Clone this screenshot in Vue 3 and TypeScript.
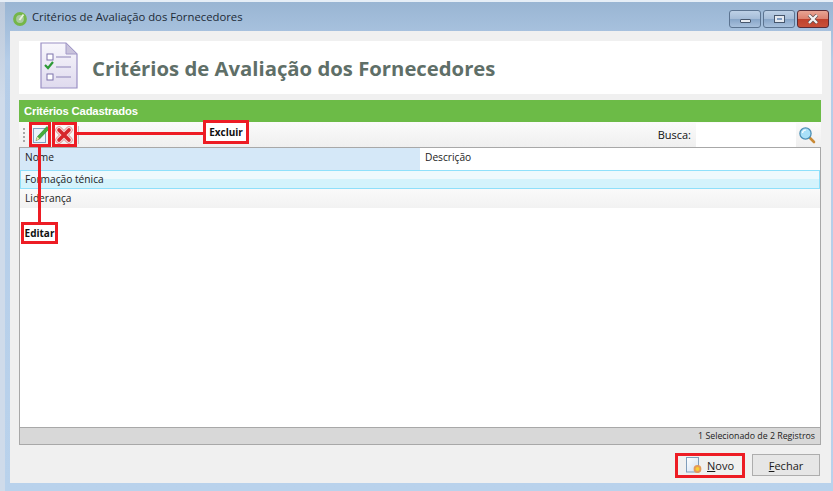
<script setup lang="ts">
const rows: string[] = ['Formação ténica', 'Liderança']
</script>

<template>
  <div class="window">
    <div class="titlebar">
      <svg class="appicon" width="16" height="16" viewBox="0 0 16 16">
        <circle cx="8" cy="8" r="5.4" fill="#a9c9a0" stroke="#74b648" stroke-width="3" />
        <path d="M7.5 9 L11.5 3.5" stroke="#e8f3dd" stroke-width="1.8" />
      </svg>
      <span class="title">Critérios de Avaliação dos Fornecedores</span>
      <div class="controls">
        <div class="ctl"><span class="min"></span></div>
        <div class="ctl"><span class="max"></span></div>
        <div class="ctl close">
          <svg width="12" height="10" viewBox="0 0 12 10">
            <path d="M2 1 L10 9 M10 1 L2 9" stroke="#5a4a4a" stroke-width="3.6" />
            <path d="M2 1 L10 9 M10 1 L2 9" stroke="#f4f4f4" stroke-width="2.4" />
          </svg>
        </div>
      </div>
    </div>
    <div class="content">
      <div class="header">
        <svg class="docicon" width="38" height="48" viewBox="0 0 38 48">
          <defs>
            <linearGradient id="docbg" x1="0" y1="0" x2="0" y2="1">
              <stop offset="0" stop-color="#f8f7fc" />
              <stop offset="1" stop-color="#dfdaee" />
            </linearGradient>
          </defs>
          <path d="M1 1 H26 L37 12 V46 H1 Z" fill="url(#docbg)" stroke="#9a8fc4" stroke-width="1.2" />
          <path d="M26 1 V12 H37 Z" fill="#c9c3dc" stroke="#a49bc8" stroke-width="1" />
          <rect x="7" y="12" width="6" height="6" fill="#fff" stroke="#7d73ab" />
          <rect x="7" y="32" width="6" height="6" fill="#fff" stroke="#7d73ab" />
          <path d="M5 23 L8 26 L13 20" fill="none" stroke="#2d9a36" stroke-width="2.2" />
          <path d="M16 15 H31 M16 25 H31 M16 35 H31" stroke="#8d84b8" stroke-width="1" />
        </svg>
        <h1 class="heading">Critérios de Avaliação dos Fornecedores</h1>
      </div>
      <div class="greenbar">Critérios Cadastrados</div>
      <div class="toolbar">
        <span class="grip"></span>
        <button class="tool">
          <svg width="20" height="20" viewBox="0 0 20 20">
            <rect x="3.5" y="3.5" width="12" height="14" fill="#eaf3fb" stroke="#7ea3c4" />
            <path d="M6 15.5 L7.5 11.5 L17 1.5 L19 4 L9.5 14 Z" fill="#46ad3a" stroke="#2c7d26" stroke-width=".6" />
            <path d="M6 15.5 L7.5 11.5 L9.5 14 Z" fill="#f1e3b2" />
          </svg>
        </button>
        <button class="tool">
          <svg width="18" height="18" viewBox="0 0 18 18">
            <path d="M4 4 L14 14 M14 4 L4 14" stroke="#d97a7a" stroke-width="7" stroke-linecap="round" />
            <path d="M4 4 L14 14 M14 4 L4 14" stroke="#f6dada" stroke-width="6" stroke-linecap="round" />
            <path d="M4 4 L14 14 M14 4 L4 14" stroke="#d6272c" stroke-width="3.6" stroke-linecap="round" />
          </svg>
        </button>
        <span class="sep"></span>
        <span class="spacer"></span>
        <span class="busca">Busca:</span>
        <span class="searchbox"></span>
        <svg class="lens" width="18" height="18" viewBox="0 0 18 18">
          <path d="M11 11 L16 16" stroke="#c98a35" stroke-width="2.6" stroke-linecap="round" />
          <circle cx="7.5" cy="7.5" r="5.6" fill="#a9e0f8" stroke="#4c8fb5" stroke-width="1.3" />
          <path d="M4.5 7 A3.4 3.4 0 0 1 8 4" fill="none" stroke="#fff" stroke-width="1.2" />
        </svg>
      </div>
      <div class="grid">
        <div class="grid-head">
          <div class="col-name">Nome</div>
          <div class="col-desc">Descrição</div>
        </div>
        <div class="grid-body">
          <div
            v-for="(row, i) in rows"
            :key="row"
            class="row"
            :class="{ selected: i === 0 }"
          >{{ row }}</div>
        </div>
        <div class="status">1 Selecionado de 2 Registros</div>
      </div>
      <div class="footer">
        <button class="btn novo">
          <svg width="18" height="18" viewBox="0 0 18 18">
            <defs>
              <linearGradient id="pg" x1="0" y1="0" x2="1" y2="1">
                <stop offset="0" stop-color="#ffffff" />
                <stop offset="1" stop-color="#cfe0f2" />
              </linearGradient>
            </defs>
            <rect x="1.5" y="1.5" width="12" height="14.5" fill="url(#pg)" stroke="#7f9dbb" />
            <circle cx="12.5" cy="13" r="3.9" fill="#e49a5a" />
            <circle cx="12.5" cy="13" r="2" fill="#f9cf35" />
          </svg>
          <span><u>N</u>ovo</span>
        </button>
        <button class="btn fechar"><span><u>F</u>echar</span></button>
      </div>
    </div>

    <div class="mark m-edit"></div>
    <div class="mark m-del"></div>
    <div class="mark m-novo"></div>
    <div class="line l-h"></div>
    <div class="line l-v"></div>
    <div class="label l-excluir">Excluir</div>
    <div class="label l-editar">Editar</div>
  </div>
</template>

<style>
html, body { margin: 0; padding: 0; background: #b9d2ec; }
</style>

<style scoped>
.window {
  position: relative;
  width: 833px;
  height: 491px;
  box-sizing: border-box;
  overflow: hidden;
  border-top: 2px solid #e6eef7;
  padding: 0 2px 8px 10px;
  display: flex;
  flex-direction: column;
  font-family: "Liberation Sans", Arial, sans-serif;
  background: linear-gradient(180deg, #99b5d3 0%, #b5cde8 12%, #b9d2ec 100%);
}
.window::before {
  content: "";
  position: absolute;
  left: 0;
  top: -2px;
  bottom: 0;
  width: 5px;
  background: linear-gradient(180deg, #bcc9da 0%, #cfdbea 20%, #cfdbea 100%);
}
.titlebar {
  position: relative;
  height: 29px;
  flex: none;
  display: flex;
  align-items: center;
  margin-left: 2px;
}
.appicon { margin-top: 9px; margin-left: 0; align-self: flex-start; }
.title {
  margin-left: 4px;
  margin-top: -1px;
  font-size: 11.3px;
  color: #1c2a36;
  font-family: "Open Sans", "Liberation Sans", sans-serif;
}
.controls {
  margin-left: auto;
  margin-right: 2px;
  margin-top: 8px;
  align-self: flex-start;
  display: flex;
  gap: 2px;
  align-items: flex-start;
}
.ctl {
  width: 30px;
  height: 16px;
  border: 1px solid #5c7491;
  border-radius: 3px;
  background: linear-gradient(180deg, #bdd0e6 0%, #a6bdd8 48%, #88a6c8 52%, #a8c0dc 100%);
  display: flex;
  align-items: center;
  justify-content: center;
}
.min {
  width: 9px;
  height: 2px;
  margin-top: 4px;
  background: #e8ecf2;
  border: 1px solid #46566c;
  border-radius: 1px;
}
.max {
  width: 5px;
  height: 2px;
  background: #7f9cc2;
  border: 2px solid #e4e9f0;
  outline: 1px solid #46566c;
}
.close {
  border-color: #5a2a34;
  background: linear-gradient(180deg, #e9a493 0%, #dd8270 48%, #c0412c 52%, #c85038 100%);
}
.content {
  flex: 1;
  min-height: 0;
  background: #f0f0f0;
  padding: 10px 10px 0 9px;
  display: flex;
  flex-direction: column;
}
.header {
  height: 53px;
  flex: none;
  margin-right: -1px;
  background: #fff;
  display: flex;
  align-items: center;
}
.docicon { margin-left: 21px; margin-top: -3px; }
.heading {
  margin: 0 0 0 14px;
  font-size: 20.3px;
  font-weight: 700;
  color: #5f6f68;
  font-family: "Open Sans", "Liberation Sans", sans-serif;
}
.greenbar {
  margin-top: 6px;
  height: 22px;
  flex: none;
  background: #6cbb47;
  color: #fff;
  font-size: 11.3px;
  font-weight: 700;
  line-height: 22px;
  padding-left: 5px;
  letter-spacing: -.2px;
}
.toolbar {
  height: 25px;
  flex: none;
  display: flex;
  align-items: center;
  background: linear-gradient(180deg, #fbfbfb 0%, #efefef 100%);
}
.grip {
  width: 2px;
  height: 14px;
  margin-left: 4px;
  background: repeating-linear-gradient(180deg, #a8a8a8 0 2px, transparent 2px 4px);
}
.tool {
  width: 20px;
  height: 20px;
  margin-left: 5px;
  padding: 0;
  border: 0;
  background: none;
  display: flex;
  align-items: center;
  justify-content: center;
}
.tool + .tool { margin-left: 4px; }
.sep {
  width: 1px;
  height: 18px;
  margin-left: 4px;
  background: #c4c4c4;
}
.spacer { flex: 1; }
.busca {
  font-size: 11px;
  color: #111;
  font-family: "Open Sans", "Liberation Sans", sans-serif;
  margin-right: 5px;
}
.searchbox {
  width: 100px;
  height: 24px;
  background: #fff;
}
.lens { margin: 0 5px 0 2px; }
.grid {
  flex: none;
  height: 298px;
  box-sizing: border-box;
  border: 1px solid #a8a8a8;
  background: #fff;
  display: flex;
  flex-direction: column;
}
.grid-head {
  height: 22px;
  flex: none;
  display: flex;
  font-size: 10.2px;
  line-height: 19px;
  color: #222;
  font-family: "Open Sans", "Liberation Sans", sans-serif;
}
.col-name {
  width: 400px;
  box-sizing: border-box;
  padding-left: 5px;
  background: #d5e8f8;
}
.col-desc { padding-left: 5px; }
.grid-body { flex: 1; min-height: 0; }
.row {
  height: 19px;
  box-sizing: border-box;
  padding-left: 5px;
  font-size: 10.2px;
  line-height: 19px;
  color: #222;
  font-family: "Open Sans", "Liberation Sans", sans-serif;
  background: linear-gradient(180deg, #fafafa, #f2f2f2);
}
.row.selected {
  border: 1px solid #8fe0fb;
  padding-left: 4px;
  line-height: 16px;
  background: linear-gradient(180deg, #eef9fd 0 45%, #d4f3fc 45% 100%);
}
.status {
  height: 16px;
  flex: none;
  background: #d8d8d8;
  border-top: 1px solid #a8a8a8;
  font-size: 8.8px;
  line-height: 16px;
  text-align: right;
  padding-right: 5px;
  color: #222;
  font-family: "Open Sans", "Liberation Sans", sans-serif;
}
.footer {
  flex: 1;
  display: flex;
  justify-content: flex-end;
  align-items: flex-start;
  gap: 8px;
  padding: 9px 1px 0 0;
}
.btn {
  box-sizing: border-box;
  height: 22px;
  border: 1px solid #adadad;
  background: #e6e6e6;
  font-size: 11px;
  color: #1a1a1a;
  font-family: "Open Sans", "Liberation Sans", sans-serif;
  display: flex;
  align-items: center;
  justify-content: center;
  padding: 0;
}
.novo {
  width: 68px;
  justify-content: flex-start;
  padding-left: 8px;
  gap: 4px;
  background: #f0f0f0;
  border-color: transparent;
}
.fechar { width: 68px; }
.mark {
  position: absolute;
  box-sizing: border-box;
  border: 3px solid #ed1c24;
}
.m-edit { left: 29px; top: 120px; width: 22px; height: 25px; }
.m-del { left: 52px; top: 120px; width: 25px; height: 25px; }
.m-novo { left: 675px; top: 451px; width: 70px; height: 25px; }
.line { position: absolute; background: #ed1c24; }
.l-h { left: 77px; top: 130px; width: 127px; height: 3px; }
.l-v { left: 38px; top: 145px; width: 3px; height: 76px; }
.label {
  position: absolute;
  box-sizing: border-box;
  border: 3px solid #ed1c24;
  background: #fff;
  font-size: 10px;
  font-weight: 700;
  color: #111;
  display: flex;
  align-items: center;
  justify-content: center;
  font-family: "Open Sans", "Liberation Sans", sans-serif;
}
.l-excluir { left: 203px; top: 118px; width: 46px; height: 24px; }
.l-editar { left: 21px; top: 220px; width: 37px; height: 22px; }
</style>
